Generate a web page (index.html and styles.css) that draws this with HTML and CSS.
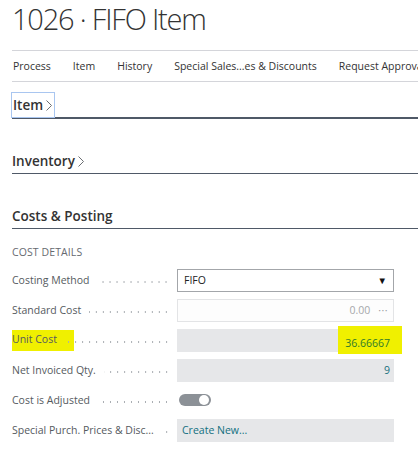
FILE: index.html
```html
<!DOCTYPE html>
<html lang="en">
<head>
<meta charset="utf-8">
<title>1026 · FIFO Item</title>
<link rel="stylesheet" href="styles.css">
</head>
<body>
<div class="page">
  <header class="page-header">
    <h1 class="title">1026 · FIFO Item</h1>
  </header>
  <nav class="actions">
    <span class="action">Process</span>
    <span class="action">Item</span>
    <span class="action">History</span>
    <span class="action">Special Sales...es &amp; Discounts</span>
    <span class="action">Request Approval</span>
  </nav>

  <section class="fasttab fasttab-focused">
    <h2 class="fasttab-head"><span class="fasttab-title focus-ring">Item<svg class="chev" width="6" height="11" viewBox="0 0 6 11"><polyline points="0.5,0.5 5.5,5.5 0.5,10.5" fill="none" stroke="#6b6e72" stroke-width="1"/></svg></span></h2>
  </section>

  <section class="fasttab">
    <h2 class="fasttab-head"><span class="fasttab-title">Inventory<svg class="chev" width="6" height="11" viewBox="0 0 6 11"><polyline points="0.5,0.5 5.5,5.5 0.5,10.5" fill="none" stroke="#6b6e72" stroke-width="1"/></svg></span></h2>
  </section>

  <section class="fasttab">
    <h2 class="fasttab-head"><span class="fasttab-title">Costs &amp; Posting</span></h2>
    <div class="group-caption">COST DETAILS</div>
    <div class="fields">
      <div class="row">
        <div class="label"><span class="label-text">Costing Method</span><span class="leader"></span></div>
        <div class="field field-select"><span class="val-left">FIFO</span><span class="caret">▼</span></div>
      </div>
      <div class="row">
        <div class="label"><span class="label-text">Standard Cost</span><span class="leader"></span></div>
        <div class="field field-edit"><span class="val-muted">0.00</span><span class="more">···</span></div>
      </div>
      <div class="row">
        <div class="label"><span class="label-text hl-label">Unit Cost</span><span class="leader"></span></div>
        <div class="field field-ro"><span class="val hl-value">36.66667</span></div>
      </div>
      <div class="row">
        <div class="label"><span class="label-text">Net Invoiced Qty.</span><span class="leader"></span></div>
        <div class="field field-ro"><span class="val">9</span></div>
      </div>
      <div class="row">
        <div class="label"><span class="label-text">Cost is Adjusted</span><span class="leader"></span></div>
        <div class="field field-toggle"><span class="toggle"><span class="knob"></span></span></div>
      </div>
      <div class="row">
        <div class="label"><span class="label-text">Special Purch. Prices &amp; Disc...</span><span class="leader"></span></div>
        <div class="field field-ro field-link"><span class="link">Create New...</span></div>
      </div>
    </div>
  </section>
</div>
</body>
</html>
```

FILE: styles.css
```css
html, body {
  margin: 0;
  padding: 0;
  background: #ffffff;
}

body {
  font-family: "Open Sans", "Noto Sans", "Liberation Sans", sans-serif;
  color: #333333;
  overflow: hidden;
}

.page {
  width: 418px;
  padding-left: 12px;
  box-sizing: border-box;
}

.page-header {
  height: 50px;
  display: flex;
  align-items: flex-start;
}

.title {
  margin: 0;
  font-size: 29px;
  font-weight: 300;
  line-height: 40px;
  color: #333333;
  letter-spacing: -1.2px;
  white-space: nowrap;
  position: relative;
  top: -1px;
}

.actions {
  display: flex;
  gap: 22px;
  height: 30px;
  align-items: center;
  border-top: 1px solid #d4d5da;
  border-bottom: 1px solid #d4d5da;
  padding-left: 1px;
  white-space: nowrap;
  overflow: hidden;
}

.action {
  font-size: 10.5px;
  color: #333333;
  flex: none;
}

.fasttab-head {
  margin: 0;
  font-size: 13.5px;
  font-weight: 600;
  color: #333333;
  border-bottom: 1px solid #4f5967;
  line-height: 24px;
  padding-top: 30px;
}

.fasttab-focused .fasttab-head {
  padding-top: 11px;
  border-bottom: 2px solid #4f5967;
}

.fasttab-title {
  display: inline-flex;
  align-items: center;
  white-space: nowrap;
  padding-right: 2px;
}

.focus-ring {
  outline: 1px solid #a9c6f0;
  padding-left: 1px;
  padding-right: 2px;
}

.chev {
  margin-left: 3px;
  margin-top: 1px;
  display: block;
}

.group-caption {
  margin-top: 15px;
  font-size: 10.5px;
  line-height: 16px;
  color: #666a70;
  letter-spacing: 0.1px;
}

.fields {
  display: flex;
  flex-direction: column;
  margin-top: 5px;
}

.row {
  display: grid;
  grid-template-columns: 165px 217px;
  height: 30px;
  align-items: center;
}

.label {
  display: flex;
  align-items: center;
  font-size: 10.5px;
  color: #555a60;
  white-space: nowrap;
  overflow: hidden;
  padding-right: 7px;
}

.label-text {
  flex: none;
}

.leader {
  flex: 1;
  height: 4px;
  margin-left: 8px;
  margin-top: 3px;
  background-image: radial-gradient(circle, #a9adb2 0.7px, transparent 1.1px);
  background-size: 7px 4px;
  background-repeat: repeat-x;
  background-position: right center;
}

.field {
  height: 23px;
  box-sizing: border-box;
  display: flex;
  align-items: center;
  font-size: 10.5px;
}

.field-select {
  border: 1px solid #a3a6aa;
  background: #fff;
  padding: 0 6px 0 6px;
  justify-content: space-between;
}

.val-left {
  color: #222;
}

.caret {
  font-size: 9.5px;
  color: #111;
}

.field-edit {
  border: 1px solid #e3e4e6;
  background: #fdfdfd;
  justify-content: flex-end;
  padding-right: 5px;
}

.val-muted {
  color: #a6a8ab;
}

.more {
  color: #9a9da1;
  margin-left: 8px;
  letter-spacing: 0.5px;
}

.field-ro {
  background: #e6e7e9;
  justify-content: flex-end;
  padding-right: 4px;
}

.val {
  color: #17707e;
}

.hl-value {
  background: #f0f000;
  color: #2f7a2c;
  padding: 10px 12px 4px 7px;
  margin-right: -12px;
}

.hl-label {
  background: #f0f000;
  padding: 2px 17px 5px 9px;
  margin-left: -9px;
  margin-right: -17px;
}

.field-toggle {
  background: transparent;
  padding-left: 2px;
}

.toggle {
  width: 32px;
  height: 12px;
  border-radius: 6px;
  background: #8c9197;
  display: flex;
  align-items: center;
  justify-content: flex-end;
  padding-right: 2px;
  box-sizing: border-box;
}

.knob {
  width: 10px;
  height: 10px;
  border-radius: 50%;
  background: #ffffff;
}

.field-link {
  justify-content: flex-start;
  padding-left: 5px;
}

.link {
  color: #127080;
}
```
